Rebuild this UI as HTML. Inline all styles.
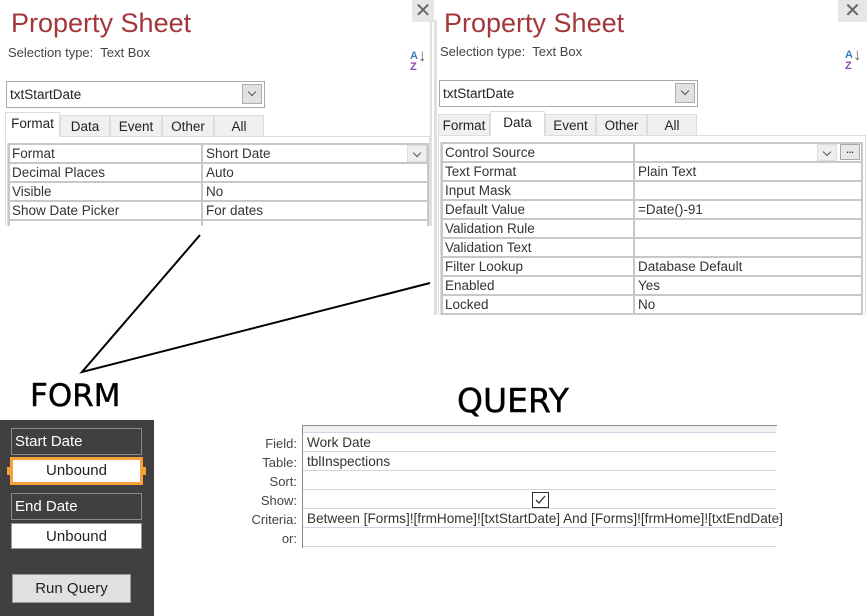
<!DOCTYPE html>
<html><head><meta charset="utf-8"><style>
*{box-sizing:border-box;margin:0;padding:0}
body{width:867px;height:616px;position:relative;background:#fff;font-family:"Liberation Sans",sans-serif;color:#333;overflow:hidden}
.a{position:absolute}
.title{font-family:"Liberation Sans",sans-serif;font-size:27px;color:#a4373a;white-space:nowrap}
.sel{font-size:13px;color:#444;white-space:nowrap}
.x{background:#e6e6e6;font-size:20px;color:#666;text-align:center;line-height:22px}
.combo{border:1px solid #aaa;background:#fff;font-size:13.5px;color:#222;padding:5px 3px}
.dd{position:absolute;right:2px;top:2px;width:20px;height:20px;background:#e1e1e1;border:1px solid #adadad}
.dd:after{content:"";position:absolute;left:6px;top:4px;width:5px;height:5px;border-right:1px solid #555;border-bottom:1px solid #555;transform:rotate(45deg)}
.tab{position:absolute;background:#f0f0f0;border:1px solid #ddd;border-bottom:none;font-size:13.5px;color:#222;text-align:center;line-height:21px}
.tab.on{background:#fff;z-index:2}
.grid{position:absolute;background:#c8c8c8;padding:2px 2px 0 2px;border-left:1px solid #ddd}
.row{display:flex;height:17px;margin-bottom:2px;font-size:13.5px;color:#333;line-height:17px;white-space:nowrap}
.row div{background:#fff;padding-left:2px;overflow:hidden;position:relative}
.row div+div{margin-left:2px;padding-left:3px}
.azA{font-size:11px;color:#3b7bc0;font-weight:bold}
.azZ{font-size:11px;color:#8a4bb0;font-weight:bold}
.big{font-family:"DejaVu Sans",sans-serif;font-size:31px;color:#000;-webkit-text-stroke:0.4px #000}
.lbl{position:absolute;left:11px;width:131px;height:27px;border:1px solid #8a8a8a;color:#fff;font-size:15px;padding:4px 3px}
.ub{position:absolute;background:#fff;text-align:center;font-size:15px;color:#222}
.ql{position:absolute;right:570px;font-size:13px;color:#444;text-align:right}
.qrow{position:absolute;left:303px;width:473px;height:19px;border-bottom:1px solid #cfd6e3;font-size:13.6px;color:#333;padding-left:4px;line-height:19px;white-space:nowrap}
</style></head><body>

<div class="a" style="left:430px;top:0;width:2px;height:226px;background:#e0e0e0"></div>
<div class="a x" style="left:412px;top:0;width:22px;height:22px">✕</div>
<div class="a title" style="left:11px;top:8px">Property Sheet</div>
<div class="a sel" style="left:8px;top:45px">Selection type:&nbsp; Text Box</div>
<div class="a" style="left:410px;top:50px;line-height:9px"><span class="azA">A</span><br><span class="azZ">Z</span></div>
<div class="a" style="left:418px;top:46px;font-size:17px;color:#666">↓</div>
<div class="a combo" style="left:6px;top:81px;width:259px;height:27px">txtStartDate<div class="dd"></div></div>
<div class="tab on" style="left:5px;top:112px;width:55px;height:25px">Format</div>
<div class="tab" style="left:60px;top:115px;width:50px;height:22px">Data</div>
<div class="tab" style="left:110px;top:115px;width:52px;height:22px">Event</div>
<div class="tab" style="left:162px;top:115px;width:52px;height:22px">Other</div>
<div class="tab" style="left:214px;top:115px;width:50px;height:22px">All</div>
<div class="a" style="left:5px;top:136px;width:425px;height:90px;border:1px solid #ddd;border-bottom:none;background:#fff"></div>
<div class="grid" style="left:7px;top:143px;width:422px;height:83px">
<div class="row"><div style="width:191px">Format</div><div style="flex:1">Short Date<span class="dd" style="top:0;right:0;height:17px;background:#eee;border-color:#ddd"></span></div></div>
<div class="row"><div style="width:191px">Decimal Places</div><div style="flex:1">Auto</div></div>
<div class="row"><div style="width:191px">Visible</div><div style="flex:1">No</div></div>
<div class="row"><div style="width:191px">Show Date Picker</div><div style="flex:1">For dates</div></div>
<div class="row"><div style="width:191px"></div><div style="flex:1"></div></div>
</div>

<div class="a" style="left:434px;top:20px;width:3px;height:295px;background:#e0e0e0"></div>
<div class="a x" style="left:838px;top:0;width:29px;height:22px">✕</div>
<div class="a title" style="left:444px;top:8px">Property Sheet</div>
<div class="a sel" style="left:440px;top:44px">Selection type:&nbsp; Text Box</div>
<div class="a" style="left:845px;top:49px;line-height:9px"><span class="azA">A</span><br><span class="azZ">Z</span></div>
<div class="a" style="left:853px;top:45px;font-size:17px;color:#666">↓</div>
<div class="a combo" style="left:439px;top:80px;width:259px;height:27px">txtStartDate<div class="dd"></div></div>
<div class="tab" style="left:438px;top:114px;width:52px;height:22px">Format</div>
<div class="tab on" style="left:490px;top:111px;width:55px;height:25px">Data</div>
<div class="tab" style="left:545px;top:114px;width:51px;height:22px">Event</div>
<div class="tab" style="left:596px;top:114px;width:51px;height:22px">Other</div>
<div class="tab" style="left:647px;top:114px;width:50px;height:22px">All</div>
<div class="a" style="left:438px;top:135px;width:428px;height:180px;border:1px solid #ddd;border-bottom:none;background:#fff"></div>
<div class="grid" style="left:440px;top:142px;width:423px;height:173px">
<div class="row"><div style="width:190px">Control Source</div><div style="flex:1"><span class="dd" style="top:0;right:24px;height:17px;background:#eee;border-color:#ddd"></span><span style="position:absolute;right:1px;top:0;width:20px;height:16px;background:#e8e8e8;border:1px solid #aaa;font-size:9px;line-height:10px;text-align:center;font-weight:bold">...</span></div></div>
<div class="row"><div style="width:190px">Text Format</div><div style="flex:1">Plain Text</div></div>
<div class="row"><div style="width:190px">Input Mask</div><div style="flex:1"></div></div>
<div class="row"><div style="width:190px">Default Value</div><div style="flex:1">=Date()-91</div></div>
<div class="row"><div style="width:190px">Validation Rule</div><div style="flex:1"></div></div>
<div class="row"><div style="width:190px">Validation Text</div><div style="flex:1"></div></div>
<div class="row"><div style="width:190px">Filter Lookup</div><div style="flex:1">Database Default</div></div>
<div class="row"><div style="width:190px">Enabled</div><div style="flex:1">Yes</div></div>
<div class="row"><div style="width:190px">Locked</div><div style="flex:1">No</div></div>
</div>

<svg class="a" style="left:0;top:0" width="867" height="616"><path d="M200 235 L82 372 L430 283" fill="none" stroke="#000" stroke-width="2"/></svg>

<div class="a big" style="left:30px;top:378px">FORM</div>
<div class="a" style="left:0;top:420px;width:154px;height:196px;background:#404040"></div>
<div class="lbl" style="top:428px">Start Date</div>
<div class="ub" style="left:10px;top:457px;width:133px;height:28px;border:3px solid #f7a13a;line-height:22px">Unbound</div>
<div class="a" style="left:7px;top:467px;width:5px;height:8px;background:#f7a13a"></div>
<div class="a" style="left:141px;top:467px;width:5px;height:8px;background:#f7a13a"></div>
<div class="lbl" style="top:493px">End Date</div>
<div class="ub" style="left:11px;top:523px;width:131px;height:26px;border:1px solid #999;line-height:25px">Unbound</div>
<div class="a" style="left:12px;top:574px;width:119px;height:29px;background:#e1e1e1;border:1px solid #999;font-size:15px;color:#222;text-align:center;line-height:27px">Run Query</div>

<div class="a big" style="left:457px;top:381px;font-size:33px">QUERY</div>
<div class="ql" style="top:436px">Field:</div>
<div class="ql" style="top:455px">Table:</div>
<div class="ql" style="top:474px">Sort:</div>
<div class="ql" style="top:493px">Show:</div>
<div class="ql" style="top:512px">Criteria:</div>
<div class="ql" style="top:531px">or:</div>
<div class="a" style="left:302px;top:425px;width:475px;height:123px;border:1px solid #888;border-right:none;border-bottom:none"></div>
<div class="a" style="left:303px;top:426px;width:473px;height:7px;background:#f0f0f0;border-bottom:1px solid #cfd6e3"></div>
<div class="qrow" style="top:433px">Work Date</div>
<div class="qrow" style="top:452px">tblInspections</div>
<div class="qrow" style="top:471px"></div>
<div class="qrow" style="top:490px"></div>
<div class="qrow" style="top:509px">Between [Forms]![frmHome]![txtStartDate] And [Forms]![frmHome]![txtEndDate]</div>
<div class="qrow" style="top:528px"></div>
<div class="a" style="left:532px;top:492px;width:17px;height:16px;border:1px solid #333;background:#fff"></div>
<svg class="a" style="left:532px;top:492px" width="17" height="16"><path d="M4 8 L7 11 L13 4" fill="none" stroke="#333" stroke-width="1.3"/></svg>
</body></html>
